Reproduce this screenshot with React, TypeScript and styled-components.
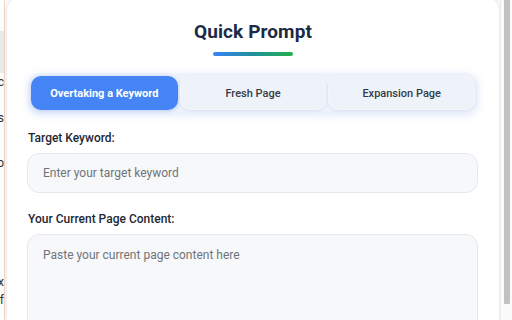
import React from "react";
import styled, { createGlobalStyle } from "styled-components";

const Global = createGlobalStyle`
  html, body { margin: 0; padding: 0; background: #ffffff; overflow: hidden; }
  body { font-family: Roboto, "Noto Sans", Arial, sans-serif; }
  * { box-sizing: border-box; }
`;

const Page = styled.div`
  display: flex;
  width: 512px;
  height: 320px;
  overflow: hidden;
  background: #ffffff;
`;

const Backdrop = styled.div`
  width: 5px;
  flex: none;
  display: flex;
  flex-direction: column;
  border-right: 1px solid #f6d9cb;
  overflow: hidden;
  padding-top: 31px;
`;

const Band = styled.div`
  height: 42px;
  flex: none;
  background: #ececec;
`;

const Line = styled.div<{ $top: number }>`
  flex: none;
  margin-top: ${(p) => p.$top}px;
  height: 16px;
  line-height: 16px;
  font-size: 12px;
  color: #333333;
  white-space: nowrap;
  direction: rtl;
  text-align: right;
`;

const Card = styled.div`
  flex: 1;
  margin-top: -5px;
  margin-left: 1px;
  background: #ffffff;
  border-radius: 16px 16px 0 0;
  box-shadow: 0 0 6px rgba(0, 0, 0, 0.1);
  border: 1px solid #eeeeee;
  border-bottom: none;
  padding: 24px 21px 0 20px;
  display: flex;
  flex-direction: column;
  & > * { flex-shrink: 0; }
`;

const Header = styled.div`
  display: flex;
  flex-direction: column;
  align-items: center;
  padding-left: 1px;
`;

const Title = styled.h1`
  margin: 0;
  font-size: 19px;
  line-height: 24px;
  font-weight: 700;
  color: #1c2a44;
  letter-spacing: 0.1px;
`;

const Underline = styled.div`
  margin-top: 8px;
  width: 80px;
  height: 4px;
  border-radius: 2px;
  background: linear-gradient(90deg, #3b82f6 0%, #1f8f9a 50%, #23b24a 100%);
`;

const Tabs = styled.div`
  margin-top: 17px;
  margin-left: 1px;
  display: flex;
  gap: 2px;
  padding: 3px;
  border-radius: 12px;
  background: #eef2fb;
  box-shadow: 0 2px 8px rgba(80, 120, 230, 0.18);
`;

const Tab = styled.button<{ $active?: boolean }>`
  flex: 1;
  height: 34px;
  border: none;
  border-radius: 10px;
  font-family: Roboto, "Noto Sans", Arial, sans-serif;
  font-size: 11px;
  font-weight: ${(p) => (p.$active ? 700 : 500)};
  color: ${(p) => (p.$active ? "#ffffff" : "#343b47")};
  background: ${(p) => (p.$active ? "#4484f4" : "#eef2f9")};
  box-shadow: ${(p) =>
    p.$active
      ? "0 1px 4px rgba(68,132,244,0.35)"
      : "0 1px 3px rgba(120,140,220,0.18), inset 0 0 0 1px #f4f6fc"};
  cursor: pointer;
`;

const Label = styled.label<{ $top: number }>`
  display: block;
  margin-top: ${(p) => p.$top}px;
  font-size: 12px;
  line-height: 16px;
  font-weight: 500;
  color: #1f2733;
  padding-left: 1px;
`;

const Input = styled.input`
  margin-top: 7px;
  width: 100%;
  height: 40px;
  border-radius: 12px;
  border: 1px solid #e6e8ee;
  background: #f7f8fa;
  padding: 0 15px;
  font-family: Roboto, "Noto Sans", Arial, sans-serif;
  font-size: 12px;
  color: #1f2733;
  outline: none;
  &::placeholder { color: #707479; }
`;

const TextArea = styled.textarea`
  margin-top: 7px;
  width: 100%;
  height: 120px;
  border-radius: 12px;
  border: 1px solid #e6e8ee;
  background: #f7f8fa;
  padding: 12px 15px;
  font-family: Roboto, "Noto Sans", Arial, sans-serif;
  font-size: 12px;
  line-height: 16px;
  resize: none;
  outline: none;
  &::placeholder { color: #707479; }
`;

const Track = styled.div`
  width: 12px;
  flex: none;
  background: #fafafa;
  border-left: 1px solid #ececec;
  padding-left: 3px;
  display: flex;
  flex-direction: column;
`;

const Thumb = styled.div`
  width: 6px;
  height: 304px;
  flex: none;
  background: #c1c1c1;
  border-radius: 0 0 1px 1px;
`;

export default function App() {
  return (
    <>
      <Global />
      <Page>
        <Backdrop>
          <Band />
          <Line $top={1}>abc</Line>
          <Line $top={20}>ls</Line>
          <Line $top={29}>no</Line>
          <Line $top={103}>ex</Line>
          <Line $top={2}>of</Line>
        </Backdrop>
        <Card>
          <Header>
            <Title>Quick Prompt</Title>
            <Underline />
          </Header>
          <Tabs>
            <Tab $active>Overtaking a Keyword</Tab>
            <Tab>Fresh Page</Tab>
            <Tab>Expansion Page</Tab>
          </Tabs>
          <Label $top={17}>Target Keyword:</Label>
          <Input placeholder="Enter your target keyword" />
          <Label $top={18}>Your Current Page Content:</Label>
          <TextArea placeholder="Paste your current page content here" />
        </Card>
        <Track>
          <Thumb />
        </Track>
      </Page>
    </>
  );
}
